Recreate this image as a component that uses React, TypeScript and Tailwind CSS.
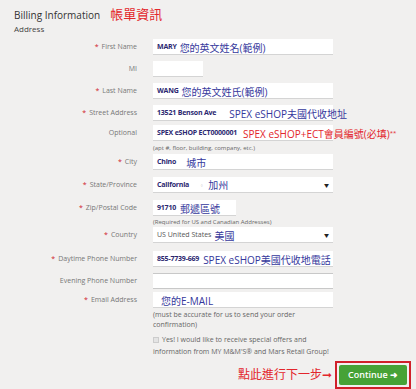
import type { ReactNode } from "react";

const cjk = "font-['Open_Sans','Noto_Sans_CJK_TC',sans-serif]";

function Field({
  label,
  required,
  className,
  children,
  help
}: {
  label: string;
  required?: boolean;
  className: string;
  children?: ReactNode;
  help?: ReactNode;
}) {
  return (
    <div className={`flex ${className}`}>
      <div className="flex h-[16px] w-[137px] shrink-0 items-center justify-end text-[7px] text-[#777]">
        {required ? <span className="mr-[3px] text-[#d0202a]">*</span> : null}
        {label}
      </div>
      <div className="ml-4 flex flex-col">
        {children}
        {help}
      </div>
    </div>
  );
}

function Box({ w = "w-[180px]", children, select }: { w?: string; children?: ReactNode; select?: boolean }) {
  return (
    <div
      className={`flex h-[16px] ${w} items-center whitespace-nowrap border-b border-[#d4d4d4] bg-white pl-[4px] pr-[4px] leading-[16px]`}
    >
      {children}
      {select ? <span className="ml-auto text-[5px] leading-[16px] text-[#222]">▼</span> : null}
    </div>
  );
}

function Val({ children }: { children: ReactNode }) {
  return <span className="text-[7px] font-bold leading-[16px] tracking-[-0.2px] text-[#2b2770]">{children}</span>;
}

function Note({ children, red }: { children: ReactNode; red?: boolean }) {
  return (
    <span className={`text-[10px] leading-[16px] ${red ? "text-[#e3262c]" : "text-[#35389c]"}`}>{children}</span>
  );
}

export default function App() {
  return (
    <div className={`h-[389px] w-[416px] overflow-hidden bg-[#f1f0ef] ${cjk}`}>
      <div className="flex items-end pl-[14px] pt-[5px]">
        <span className="text-[10px] leading-[16px] text-[#333]">Billing Information</span>
        <span className="ml-[10px] text-[13px] leading-[18px] text-[#e3262c]">帳單資訊</span>
      </div>
      <div className="pl-[14px] text-[8px] leading-[12px] text-[#444]">Address</div>

      <div className="mt-[4px] flex flex-col">
        <Field label="First Name" required className="h-[22px]">
          <Box>
            <Val>MARY</Val>
            <span className="ml-[3px]">
              <Note>您的英文姓名(範例)</Note>
            </span>
          </Box>
        </Field>
        <Field label="MI" className="h-[22px]">
          <Box w="w-[50px]" />
        </Field>
        <Field label="Last Name" required className="h-[22px]">
          <Box>
            <Val>WANG</Val>
            <span className="ml-[3px]">
              <Note>您的英文姓氏(範例)</Note>
            </span>
          </Box>
        </Field>
        <Field label="Street Address" required className="h-[20px]">
          <Box>
            <Val>13521 Benson Ave</Val>
            <span className="ml-[13px]">
              <Note>SPEX eSHOP夫國代收地址</Note>
            </span>
          </Box>
        </Field>
        <Field
          label="Optional"
          className="h-[29px]"
          help={<span className="mt-[3px] text-[6px] leading-[8px] text-[#666]">(apt #, floor, building, company, etc.)</span>}
        >
          <Box>
            <Val>SPEX eSHOP ECT0000001</Val>
            <span className="ml-[6px]">
              <Note red>
                SPEX eSHOP+ECT會員編號(必填)<sup className="text-[6px]">**</sup>
              </Note>
            </span>
          </Box>
        </Field>
        <Field label="City" required className="h-[23px]">
          <Box>
            <Val>Chino</Val>
            <span className="ml-[10px]">
              <Note>城市</Note>
            </span>
          </Box>
        </Field>
        <Field label="State/Province" required className="h-[23px]">
          <Box select>
            <Val>California</Val>
            <span className="ml-[10px] mr-[4px] text-[5px] text-[#aaa]">▫</span>
            <Note>加州</Note>
          </Box>
        </Field>
        <Field
          label="Zip/Postal Code"
          required
          className="h-[27px]"
          help={<span className="mt-[2px] text-[6px] leading-[8px] text-[#666]">(Required for US and Canadian Addresses)</span>}
        >
          <Box w="w-[83px]">
            <Val>91710</Val>
            <span className="ml-[4px]">
              <Note>郵遞區號</Note>
            </span>
          </Box>
        </Field>
        <Field label="Country" required className="h-[24px]">
          <Box select>
            <span className="text-[7px] text-[#555]">US United States</span>
            <span className="ml-[3px]">
              <Note>美國</Note>
            </span>
          </Box>
        </Field>
        <Field label="Daytime Phone Number" required className="h-[22px]">
          <Box>
            <Val>855-7739-669</Val>
            <span className="ml-[4px]">
              <Note>SPEX eSHOP美國代收地電話</Note>
            </span>
          </Box>
        </Field>
        <Field label="Evening Phone Number" className="h-[19px]">
          <div className="h-[16px] w-[180px] border-y border-[#c8c8c8] bg-white" />
        </Field>
        <Field
          label="Email Address"
          required
          className="h-[42px]"
          help={
            <span className="mt-[2px] whitespace-nowrap text-[7px] leading-[10px] text-[#666]">
              (must be accurate for us to send your order
              <br />
              confirmation)
            </span>
          }
        >
          <Box>
            <span className="ml-[4px]">
              <Note>您的E-MAIL</Note>
            </span>
          </Box>
        </Field>
        <div className="flex">
          <div className="w-[153px] shrink-0" />
          <div className="whitespace-nowrap text-[7px] leading-[12px] text-[#666]">
            <span className="mr-[3px] inline-block h-[6px] w-[6px] border border-[#ccc] bg-[#e4e4e4] align-middle" />
            Yes! I would like to receive special offers and
            <br />
            information from MY M&amp;M'S® and Mars Retail Group!
          </div>
        </div>
        <div className="mt-[3px] flex items-center justify-end pr-[5px]">
          <span className="mr-[3px] text-[12px] leading-[16px] text-[#e3262c]">點此進行下一步➞</span>
          <div className="border-[2px] border-[#d0202a] p-[2px]">
            <div className="flex h-[20px] w-[68px] items-center justify-center rounded-[2px] bg-[#46a236] text-[9px] font-semibold text-white">
              Continue ➜
            </div>
          </div>
        </div>
      </div>
    </div>
  );
}
